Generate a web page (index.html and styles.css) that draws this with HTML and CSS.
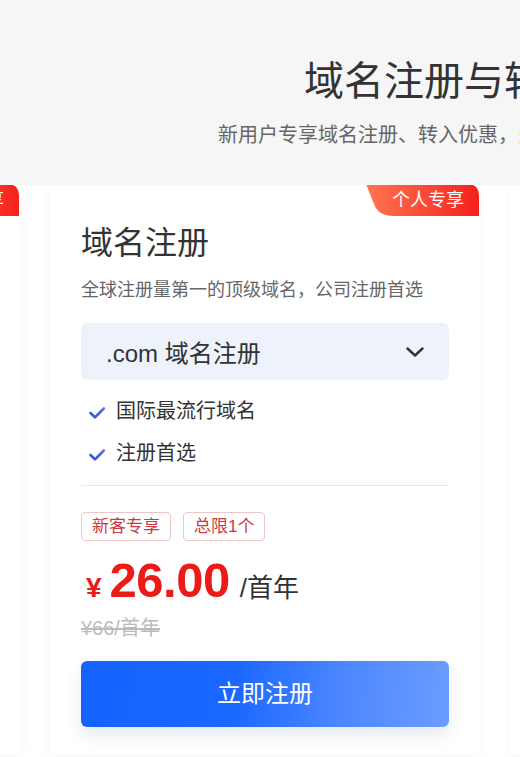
FILE: index.html
```html
<!DOCTYPE html>
<html lang="zh-CN">
<head>
<meta charset="utf-8">
<title>域名注册与转入</title>
<link rel="stylesheet" href="styles.css">
</head>
<body>
<header class="hero">
  <h1 class="hero-title">域名注册与转入</h1>
  <p class="hero-sub">新用户专享域名注册、转入优惠，多种热门后缀任你选择</p>
</header>
<section class="slider">
  <div class="track">
    <article class="card">
      <div class="badge"><svg class="badge-bg" viewBox="0 0 113 32" preserveAspectRatio="none"><defs><linearGradient id="bg1" x1="0" x2="1" y1="0" y2="0"><stop offset="0" stop-color="#ff7552"/><stop offset="1" stop-color="#f5211c"/></linearGradient></defs><path d="M0 0 H101 Q113 0 113 12 V32 H28 Q12 32 8 20 Z" fill="url(#bg1)"/></svg><span class="badge-text">企业专享</span></div>
      <h2 class="card-title">域名注册</h2>
      <p class="card-desc">全球注册量第一的顶级域名，公司注册首选</p>
      <div class="select"><span>.cn 域名注册</span><svg class="chev" viewBox="0 0 18 10"><path d="M1.5 1.5 L9 8.5 L16.5 1.5" fill="none" stroke="#333" stroke-width="2.4" stroke-linecap="round" stroke-linejoin="round"/></svg></div>
      <ul class="feats"><li>国内最流行域名</li><li>注册首选</li></ul>
      <hr class="divider">
      <div class="tags"><span class="tag">新客专享</span><span class="tag">总限1个</span></div>
      <div class="price"><span class="yen">¥</span><span class="num">26.00</span><span class="unit">/首年</span></div>
      <div class="old">¥66/首年</div>
      <button class="cta">立即注册</button>
    </article>
    <article class="card">
      <div class="badge"><svg class="badge-bg" viewBox="0 0 113 32" preserveAspectRatio="none"><defs><linearGradient id="bg2" x1="0" x2="1" y1="0" y2="0"><stop offset="0" stop-color="#ff7552"/><stop offset="1" stop-color="#f5211c"/></linearGradient></defs><path d="M0 0 H101 Q113 0 113 12 V32 H28 Q12 32 8 20 Z" fill="url(#bg2)"/></svg><span class="badge-text">个人专享</span></div>
      <h2 class="card-title">域名注册</h2>
      <p class="card-desc">全球注册量第一的顶级域名，公司注册首选</p>
      <div class="select"><span>.com 域名注册</span><svg class="chev" viewBox="0 0 18 10"><path d="M1.5 1.5 L9 8.5 L16.5 1.5" fill="none" stroke="#333" stroke-width="2.4" stroke-linecap="round" stroke-linejoin="round"/></svg></div>
      <ul class="feats"><li>国际最流行域名</li><li>注册首选</li></ul>
      <hr class="divider">
      <div class="tags"><span class="tag">新客专享</span><span class="tag">总限1个</span></div>
      <div class="price"><span class="yen">¥</span><span class="num">26.00</span><span class="unit">/首年</span></div>
      <div class="old">¥66/首年</div>
      <button class="cta">立即注册</button>
    </article>
    <article class="card">
      <h2 class="card-title">域名转入</h2>
      <p class="card-desc">转入即享优惠价格，简单快捷</p>
      <div class="select"><span>.com 域名转入</span></div>
      <ul class="feats"><li>免费转入</li><li>快速生效</li></ul>
      <hr class="divider">
      <div class="tags"><span class="tag">新客专享</span></div>
      <div class="price"><span class="yen">¥</span><span class="num">29.00</span><span class="unit">/年</span></div>
      <div class="old">¥69/年</div>
      <button class="cta">立即转入</button>
    </article>
  </div>
</section>
</body>
</html>
```
FILE: styles.css
```css
* { box-sizing: border-box; }
html, body { margin: 0; padding: 0; }
body {
  width: 520px;
  background: #fff;
  font-family: "Liberation Sans", "Noto Sans CJK SC", sans-serif;
  color: #333;
  overflow: hidden;
}
.hero {
  height: 185px;
  background: #f6f6f6;
  padding: 60px 0 0 304px;
  overflow: hidden;
  white-space: nowrap;
}
.hero-title {
  margin: 0;
  font-size: 40px;
  line-height: 42px;
  font-weight: 400;
  color: #333;
}
.hero-sub {
  margin: 19px 0 0 -86px;
  font-size: 20px;
  line-height: 28px;
  color: #666;
}
.slider { overflow: hidden; }
.track {
  display: flex;
  gap: 30px;
  margin-left: -410px;
  padding-bottom: 10px;
}
.card {
  position: relative;
  flex: 0 0 430px;
  background: #fff;
  border-radius: 4px;
  box-shadow: 0 2px 14px rgba(0, 0, 0, 0.045);
  padding: 38px 31px 27px 31px;
}
.badge {
  position: absolute;
  top: -1px;
  right: 1px;
  width: 113px;
  height: 32px;
  display: flex;
  align-items: center;
  padding-left: 26px;
}
.badge-bg {
  position: absolute;
  inset: 0;
  width: 100%;
  height: 100%;
}
.badge-text {
  position: relative;
  color: #fff;
  font-size: 18px;
  line-height: 32px;
}
.card-title {
  margin: 0;
  font-size: 32px;
  line-height: 40px;
  font-weight: 400;
  color: #333;
}
.card-desc {
  margin: 14px 0 0;
  font-size: 18px;
  line-height: 26px;
  color: #666;
}
.select {
  margin-top: 20px;
  height: 57px;
  background: #eef2fa;
  border-radius: 6px;
  display: flex;
  align-items: center;
  justify-content: space-between;
  padding: 0 25px;
  font-size: 24px;
  color: #333;
}
.chev { width: 18px; height: 10px; }
.feats {
  list-style: none;
  margin: 16px 0 0;
  padding: 0;
  display: flex;
  flex-direction: column;
  gap: 12px;
}
.feats li {
  display: flex;
  align-items: center;
  font-size: 20px;
  line-height: 30px;
  color: #333;
  padding-left: 35px;
  position: relative;
}
.feats li::before {
  content: "";
  position: absolute;
  left: 8px;
  top: 11px;
  width: 16px;
  height: 12px;
  background: url("data:image/svg+xml;utf8,<svg xmlns='http://www.w3.org/2000/svg' viewBox='0 0 16 12'><defs><linearGradient id='g' x1='0' y1='1' x2='1' y2='0'><stop offset='0' stop-color='%232f5ae0'/><stop offset='0.6' stop-color='%23405fe0'/><stop offset='1' stop-color='%237c6be3'/></linearGradient></defs><path d='M1.5 6 L6 10.3 L14.8 1.5' fill='none' stroke='url(%23g)' stroke-width='2.6' stroke-linecap='round' stroke-linejoin='round'/></svg>") no-repeat center / contain;
}
.divider {
  margin: 17px 0 0;
  border: 0;
  border-top: 1px solid #e9e9ec;
  height: 0;
}
.tags {
  margin-top: 26px;
  display: flex;
  gap: 12px;
}
.tag {
  border: 1px solid #efc6c6;
  border-radius: 4px;
  padding: 0 10px;
  font-size: 17px;
  line-height: 27px;
  color: #cc3a42;
}
.price {
  margin-top: 10px;
  display: flex;
  align-items: baseline;
  line-height: 58px;
  height: 58px;
  color: #eb1c17;
}
.yen {
  font-size: 28px;
  font-weight: 700;
  margin-left: 5px;
  margin-right: 8px;
}
.num {
  font-size: 49px;
  font-weight: 700;
  letter-spacing: -0.5px;
}
.unit {
  font-size: 26px;
  color: #333;
  margin-left: 10px;
}
.old {
  margin-top: 7px;
  font-size: 20px;
  line-height: 24px;
  color: #bbb;
  text-decoration: line-through;
}
.cta {
  display: block;
  width: 100%;
  margin-top: 21px;
  height: 66px;
  border: 0;
  border-radius: 6px;
  background: linear-gradient(95deg, #1563ff 0%, #1b68ff 42%, #4e88ff 72%, #6c9dff 100%);
  box-shadow: 0 8px 16px rgba(40, 80, 160, 0.12);
  color: #fff;
  font-family: inherit;
  font-size: 24px;
  line-height: 66px;
  padding: 0;
}
```
